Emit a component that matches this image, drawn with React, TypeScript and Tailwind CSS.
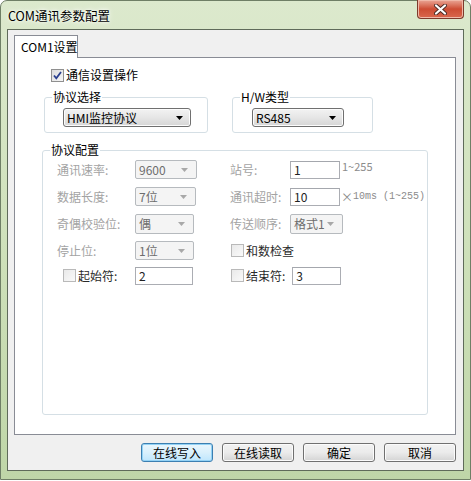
import React from "react";

const font = "font-['Noto_Sans_CJK_SC','Noto_Sans',sans-serif]";

function Arrow({ disabled }: { disabled?: boolean }) {
  return (
    <svg width="7" height="4" viewBox="0 0 7 4" className="shrink-0">
      <path d="M0 0h7L3.5 4z" fill={disabled ? "#a8a8a8" : "#000"} />
    </svg>
  );
}

function Select({
  value,
  width,
  height = 19,
  disabled,
}: {
  value: string;
  width: number;
  height?: number;
  disabled?: boolean;
}) {
  return (
    <div
      style={{ width, height }}
      className={
        disabled
          ? "flex items-center justify-between pl-[3px] pr-[8px] rounded-[2px] border border-[#b6babe] bg-[#f4f4f4] text-[#6d6d6d]"
          : "flex items-center justify-between pl-[3px] pr-[7px] rounded-[3px] border border-[#707070] bg-linear-to-b from-[#f3f3f3] via-[#e6e6e6] to-[#d6d6d6] text-black shadow-[inset_0_0_0_1px_#fcfcfc]"
      }
    >
      <span className="text-[12px] leading-[14px] whitespace-nowrap">{value}</span>
      <Arrow disabled={disabled} />
    </div>
  );
}

function Input({ value, width }: { value: string; width: number }) {
  return (
    <div
      style={{ width }}
      className="h-[18px] flex items-center pl-[3px] border border-[#abadb3] border-t-[#a4a7ad] bg-white text-[12px] leading-[14px] text-[#222]"
    >
      {value}
    </div>
  );
}

function Check({ checked, disabled }: { checked?: boolean; disabled?: boolean }) {
  return (
    <div
      className={
        disabled
          ? "w-[13px] h-[13px] shrink-0 border border-[#b9b9b9] bg-linear-to-br from-[#e9e9e9] to-[#fafafa]"
          : "w-[13px] h-[13px] shrink-0 border border-[#8f8f8f] bg-linear-to-br from-[#dcdcdc] to-[#f6f6f6] flex items-center justify-center"
      }
    >
      {checked && (
        <svg width="9" height="9" viewBox="0 0 9 9">
          <path d="M1 4.5l2.3 2.8L8 1" fill="none" stroke="#2a3f8f" strokeWidth="1.8" />
        </svg>
      )}
    </div>
  );
}

function Button({ label, focused }: { label: string; focused?: boolean }) {
  return (
    <div
      className={
        focused
          ? "w-[72px] h-[19px] flex items-center justify-center rounded-[3px] border border-[#3c7fb1] bg-linear-to-b from-[#eaf6fd] via-[#d9f0fc] to-[#bee6fd] shadow-[inset_0_0_0_1px_#93d2f5] text-[12px] leading-[14px] text-black"
          : "w-[72px] h-[19px] flex items-center justify-center rounded-[3px] border border-[#707070] bg-linear-to-b from-[#f2f2f2] via-[#ebebeb] to-[#d4d4d4] shadow-[inset_0_0_0_1px_#fbfbfb] text-[12px] leading-[14px] text-black"
      }
    >
      {label}
    </div>
  );
}

function Group({
  title,
  className,
  children,
}: {
  title: string;
  className: string;
  children?: React.ReactNode;
}) {
  return (
    <div className={"relative border border-[#d5dfe5] rounded-[3px] " + className}>
      <span className="absolute -top-[8px] left-[7px] px-[1px] bg-white text-[12px] leading-[14px] text-black whitespace-nowrap">
        {title}
      </span>
      {children}
    </div>
  );
}

const label = "text-[12px] leading-[14px] text-[#a3a3a3] whitespace-nowrap";
const darkLabel = "text-[12px] leading-[14px] text-[#2a2a2a] whitespace-nowrap";

export default function App() {
  return (
    <div className={"w-[471px] h-[481px] bg-white " + font}>
      <div className="w-[471px] h-[480px] flex flex-col rounded-t-[7px] border border-[#6f7f66] px-[6px] pb-[8px] bg-linear-to-b from-[#dce9cd] via-[#cfe1bb] to-[#bfd6a8]">
        {/* title bar */}
        <div className="h-[28px] flex items-start justify-between">
          <span className="mt-[7px] ml-[1px] text-[12.5px] leading-[16px] text-black [text-shadow:0_0_6px_#fff,0_0_3px_#fff]">
            COM通讯参数配置
          </span>
          <div className="w-[47px] h-[19px] -mt-px flex items-center justify-center rounded-b-[4px] border border-t-0 border-[#7d3a2c] bg-linear-to-b from-[#e9a595] via-[#cd4c33] to-[#d9674d] shadow-[inset_0_0_0_1px_#f0b8a8]">
            <svg width="13" height="11" viewBox="0 0 13 11">
              <path d="M2 1.5l9 8M11 1.5l-9 8" stroke="#4a2a24" strokeWidth="4" strokeLinecap="round" />
              <path d="M2 1.5l9 8M11 1.5l-9 8" stroke="#fff" strokeWidth="2.2" strokeLinecap="round" />
            </svg>
          </div>
        </div>

        {/* client area */}
        <div className="flex-1 border border-[#5f6b5a] bg-[#f0f0f0] pl-[6px] pt-[5px] pr-[7px] flex flex-col">
          <div className="w-[64px] h-[23px] -mb-px relative z-10 border border-b-0 border-[#898c95] bg-white pl-[6px] pt-[4px] text-[12px] leading-[14px] text-black whitespace-nowrap">
            COM1设置
          </div>
          <div className="w-[442px] h-[378px] border border-[#898c95] bg-white flex flex-col">
            <div className="mt-[10px] ml-[36px] flex items-center gap-[2px]">
              <Check checked />
              <span className="text-[12px] leading-[14px] text-black">通信设置操作</span>
            </div>

            <div className="mt-[15px] ml-[29px] flex gap-[24px]">
              <Group title="协议选择" className="w-[164px] h-[36px] pl-[18px] pt-[10px]">
                <Select value="HMI监控协议" width={128} />
              </Group>
              <Group title="H/W类型" className="w-[141px] h-[36px] pl-[19px] pt-[10px]">
                <Select value="RS485" width={92} />
              </Group>
            </div>

            <Group title="协议配置" className="mt-[17px] ml-[27px] w-[386px] h-[265px] pl-[14px] pt-[5px]">
              <div className="grid grid-cols-[78px_95px_60px_1fr] grid-rows-[27px_27px_27px_27px_23px] items-center">
                <span className={label}>通讯速率:</span>
                <Select value="9600" width={62} disabled />
                <span className={label}>站号:</span>
                <div className="flex items-start">
                  <Input value="1" width={50} />
                  <span className="ml-[2px] -mt-[1px] text-[11px] leading-[13px] text-[#8c8c8c]">1~255</span>
                </div>

                <span className={label}>数据长度:</span>
                <Select value="7位" width={61} disabled />
                <span className={label}>通讯超时:</span>
                <div className="flex items-center text-[#8c8c8c]">
                  <Input value="10" width={50} />
                  <span className="ml-[1px] text-[12px] leading-[13px]">×</span>
                  <span className="font-['Liberation_Mono','Noto_Sans_CJK_SC',monospace] text-[10px] leading-[13px] whitespace-pre">
                    10ms (1~255)
                  </span>
                </div>

                <span className={label}>奇偶校验位:</span>
                <Select value="偶" width={59} height={20} disabled />
                <span className={label}>传送顺序:</span>
                <Select value="格式1" width={53} height={20} disabled />

                <span className={label}>停止位:</span>
                <Select value="1位" width={59} disabled />
                <div className="col-span-2 flex items-center gap-[2px] pl-[1px]">
                  <Check disabled />
                  <span className={darkLabel}>和数检查</span>
                </div>

                <div className="flex items-center gap-[2px] pl-[6px]">
                  <Check disabled />
                  <span className={darkLabel}>起始符:</span>
                </div>
                <Input value="2" width={58} />
                <div className="col-span-2 flex items-center gap-[2px] pl-[1px]">
                  <Check disabled />
                  <span className={darkLabel}>结束符:</span>
                  <div className="ml-[5px]">
                    <Input value="3" width={49} />
                  </div>
                </div>
              </div>
            </Group>
          </div>

          <div className="mt-[8px] flex justify-end gap-[9px]">
            <Button label="在线写入" focused />
            <Button label="在线读取" />
            <Button label="确定" />
            <Button label="取消" />
          </div>
        </div>
      </div>
    </div>
  );
}
